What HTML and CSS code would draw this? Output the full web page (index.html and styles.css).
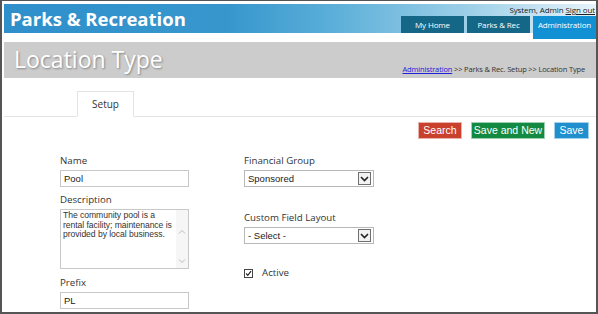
FILE: index.html
```html
<!DOCTYPE html>
<html>
<head>
<meta charset="utf-8">
<link rel="stylesheet" href="styles.css">
</head>
<body>
<div class="frame">
  <header class="header">
    <div class="brand">Parks &amp; Recreation</div>
    <div class="header-right">
      <div class="user">System, Admin <a class="signout" href="#">Sign out</a></div>
      <nav class="nav">
        <a class="nav-tab" href="#">My Home</a>
        <a class="nav-tab" href="#">Parks &amp; Rec</a>
        <a class="nav-tab active" href="#">Administration</a>
      </nav>
    </div>
  </header>

  <div class="titlebar">
    <h1 class="page-title">Location Type</h1>
    <div class="crumbs"><a class="crumb-link" href="#">Administration</a> &gt;&gt; Parks &amp; Rec. Setup &gt;&gt; Location Type</div>
  </div>

  <div class="tabs">
    <div class="tab">Setup</div>
  </div>

  <div class="actions">
    <button class="btn btn-red">Search</button>
    <button class="btn btn-green">Save and New</button>
    <button class="btn btn-blue">Save</button>
  </div>

  <div class="form">
    <div class="col">
      <label class="lbl">Name</label>
      <div class="input">Pool</div>
      <label class="lbl lbl-desc">Description</label>
      <div class="textarea">
        <div class="ta-text">The community pool is a<br>rental facility; maintenance is<br>provided by local business.</div>
        <div class="ta-scroll">
          <svg width="8" height="5" viewBox="0 0 8 5"><path d="M1 4.5 L4 1.5 L7 4.5" fill="none" stroke="#b8b8b8" stroke-width="1"/></svg>
          <svg width="8" height="5" viewBox="0 0 8 5"><path d="M1 0.5 L4 3.5 L7 0.5" fill="none" stroke="#b8b8b8" stroke-width="1"/></svg>
        </div>
      </div>
      <label class="lbl lbl-prefix">Prefix</label>
      <div class="input">PL</div>
    </div>
    <div class="col col2">
      <label class="lbl">Financial Group</label>
      <div class="select">
        <span class="sel-text">Sponsored</span>
        <span class="sel-btn"><svg width="9" height="6" viewBox="0 0 9 6"><path d="M1 1 L4.5 4.5 L8 1" fill="none" stroke="#222" stroke-width="1.6"/></svg></span>
      </div>
      <label class="lbl lbl-custom">Custom Field Layout</label>
      <div class="select">
        <span class="sel-text">- Select -</span>
        <span class="sel-btn"><svg width="9" height="6" viewBox="0 0 9 6"><path d="M1 1 L4.5 4.5 L8 1" fill="none" stroke="#222" stroke-width="1.6"/></svg></span>
      </div>
      <div class="check-row">
        <span class="checkbox"><svg width="9" height="9" viewBox="0 0 9 9"><path d="M1.5 4.5 L3.6 6.8 L7.8 1.5" fill="none" stroke="#222" stroke-width="1.5"/></svg></span>
        <span class="check-label">Active</span>
      </div>
    </div>
  </div>
</div>
</body>
</html>
```

FILE: styles.css
```css
* { box-sizing: border-box; }
html, body { margin: 0; padding: 0; background: #fff; }
body { width: 598px; height: 314px; overflow: hidden; font-family: "Open Sans", "Noto Sans", sans-serif; }

.frame {
  width: 598px;
  height: 314px;
  border: 2px solid #555;
  border-top-width: 1px;
  padding: 3px 0 0 2px;
  overflow: hidden;
}

.header {
  width: 592px;
  height: 29px;
  display: flex;
  justify-content: space-between;
  align-items: stretch;
  background: linear-gradient(to right, #2f8fcb 0%, #3797cd 38%, #5aaed8 55%, #9ccfe8 78%, #e6f3fa 100%);
}
.brand {
  color: #fff;
  font-weight: 700;
  font-size: 18.5px;
  line-height: 29px;
  padding-left: 6px;
}
.header-right {
  display: flex;
  flex-direction: column;
  align-items: flex-end;
  justify-content: space-between;
}
.user {
  font-size: 8px;
  line-height: 10px;
  color: #222;
  padding-top: 1px;
  padding-right: 1px;
  letter-spacing: -0.1px;
}
.signout { color: #222; text-decoration: underline; }
.nav { display: flex; align-items: flex-start; gap: 3px; height: 17px; }
.nav-tab {
  display: block;
  height: 17px;
  line-height: 17px;
  width: 63px;
  text-align: center;
  color: #fff;
  font-size: 8px;
  letter-spacing: -0.15px;
  text-decoration: none;
  background: #146787;
}
.nav-tab.active {
  background: #1191d4;
  height: 23px;
  position: relative;
  z-index: 1;
}

.titlebar {
  margin-top: 9px;
  width: 592px;
  height: 36px;
  background: #cccccc;
  display: flex;
  justify-content: space-between;
  align-items: flex-end;
  padding: 0 11px 3px 10px;
}
.page-title {
  margin: 0;
  align-self: center;
  color: #fff;
  font-weight: 400;
  font-size: 23px;
  line-height: 30px;
  text-shadow: 1px 1px 2px rgba(0,0,0,0.35);
  padding-top: 1px;
}
.crumbs {
  font-size: 7.5px;
  line-height: 11px;
  color: #333;
  letter-spacing: -0.15px;
}
.crumb-link { color: #2222dd; text-decoration: underline; }

.tabs {
  margin-top: 13px;
  width: 592px;
  height: 26px;
  border-bottom: 1px solid #e4e4e4;
  padding-left: 73px;
  display: flex;
  align-items: flex-end;
}
.tab {
  width: 57px;
  height: 26px;
  margin-bottom: -1px;
  border: 1px solid #e4e4e4;
  border-bottom: 1px solid #fff;
  background: #fff;
  font-size: 10px;
  line-height: 24px;
  text-align: center;
  color: #333;
}

.actions {
  margin-top: 5px;
  width: 592px;
  display: flex;
  justify-content: flex-end;
  gap: 9px;
  padding-right: 7px;
}
.btn {
  border: 1px solid rgba(255,255,255,0.6);
  height: 17px;
  padding: 0;
  font-family: "Liberation Sans", Arial, sans-serif;
  font-size: 10.5px;
  line-height: 15px;
  color: #fff;
  cursor: pointer;
}
.btn-red { background: #c9402d; width: 44px; }
.btn-green { background: #138a41; width: 74px; }
.btn-blue { background: #1f8fcd; width: 35px; }

.form {
  display: flex;
  padding-left: 56px;
  margin-top: 16px;
}
.col { width: 129px; display: flex; flex-direction: column; }
.col2 { margin-left: 55px; }
.lbl {
  font-size: 9.7px;
  line-height: 12px;
  color: #333;
  height: 12px;
}
.input {
  margin-top: 3px;
  height: 17px;
  width: 129px;
  border: 1px solid #c8c8c8;
  font-family: "Liberation Sans", Arial, sans-serif;
  font-size: 9.5px;
  line-height: 15px;
  padding-left: 3px;
  color: #222;
}
.lbl-desc { margin-top: 7px; }
.lbl-prefix { margin-top: 8px; }
.textarea {
  margin-top: 3px;
  width: 129px;
  height: 60px;
  border: 1px solid #c8c8c8;
  display: flex;
}
.ta-text {
  flex: 1;
  min-width: 0;
  font-family: "Liberation Sans", Arial, sans-serif;
  font-size: 8.6px;
  line-height: 9.5px;
  letter-spacing: -0.05px;
  color: #333;
  padding: 1px 0 0 2px;
  white-space: nowrap;
  overflow: hidden;
}
.ta-scroll {
  width: 12px;
  flex: none;
  background: #f6f6f6;
  display: flex;
  flex-direction: column;
  justify-content: space-between;
  align-items: center;
  padding: 19px 0 4px;
}

.select {
  margin-top: 3px;
  width: 130px;
  height: 17px;
  border: 1px solid #b8b8b8;
  display: flex;
  align-items: center;
  justify-content: space-between;
  padding: 0 2px 0 3px;
}
.sel-text {
  font-family: "Liberation Sans", Arial, sans-serif;
  font-size: 9.5px;
  color: #222;
}
.sel-btn {
  width: 13px;
  height: 13px;
  border: 1px solid #6f6f6f;
  background: #f2f2f2;
  display: flex;
  align-items: center;
  justify-content: center;
}
.lbl-custom { margin-top: 25px; }
.check-row {
  margin-top: 23px;
  display: flex;
  align-items: center;
  gap: 9px;
}
.checkbox {
  width: 9px;
  height: 9px;
  border: 1px solid #444;
  display: flex;
  align-items: center;
  justify-content: center;
}
.checkbox svg { display: block; }
.check-label { font-size: 9.7px; color: #333; line-height: 12px; }
```
